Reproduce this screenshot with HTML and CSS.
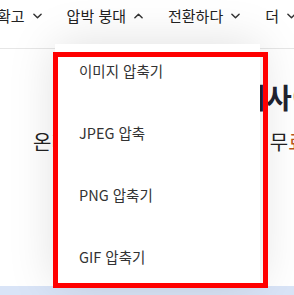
FILE: index.html
```html
<!DOCTYPE html>
<html lang="ko">
<head>
<meta charset="utf-8">
<link rel="stylesheet" href="styles.css">
</head>
<body>
<header class="header">
  <nav class="nav">
    <div class="nav-item"><span>확고</span><svg class="chev" viewBox="0 0 10 6"><polyline points="1,1 5,5 9,1"/></svg></div>
    <div class="nav-item open"><span>압박 붕대</span><svg class="chev" viewBox="0 0 10 6"><polyline points="1,5 5,1 9,5"/></svg>
      <div class="dropdown">
        <ul class="menu">
          <li>이미지 압축기</li>
          <li>JPEG 압축</li>
          <li>PNG 압축기</li>
          <li>GIF 압축기</li>
        </ul>
      </div>
    </div>
    <div class="nav-item"><span>전환하다</span><svg class="chev" viewBox="0 0 10 6"><polyline points="1,1 5,5 9,1"/></svg></div>
    <div class="nav-item"><span>더</span><svg class="chev" viewBox="0 0 10 6"><polyline points="1,1 5,5 9,1"/></svg></div>
  </nav>
</header>
<main class="hero">
  <h1 class="title">압축 리사이저</h1>
  <p class="subtitle">온라인 이미지 용량을 쉽게 무<span class="hl">료로</span></p>
</main>
<section class="band"></section>
<div class="highlight"></div>
</body>
</html>
```

FILE: styles.css
```css
html, body {
  margin: 0;
  padding: 0;
}
body {
  width: 294px;
  height: 295px;
  overflow: hidden;
  position: relative;
  background: #fff;
  font-family: "Noto Sans CJK KR", "Noto Sans", sans-serif;
  color: #222;
}
.header {
  height: 48px;
  border-bottom: 1px solid #e6e6e6;
  background: #fff;
}
.nav {
  display: flex;
  gap: 25px;
  margin-left: -3px;
  padding-top: 6px;
  white-space: nowrap;
}
.nav-item {
  display: flex;
  align-items: center;
  gap: 8px;
  font-size: 15px;
  line-height: 20px;
  color: #222;
}
.chev {
  width: 9px;
  height: 6px;
  fill: none;
  stroke: #333;
  stroke-width: 1.6;
  stroke-linecap: round;
  stroke-linejoin: round;
}
.dropdown {
  position: absolute;
  left: 55px;
  top: 44px;
  width: 205px;
  height: 241px;
  background: #fff;
  box-shadow: 0 0 45px rgba(0, 0, 0, 0.13);
  z-index: 5;
}
.menu {
  list-style: none;
  margin: 0;
  padding: 17px 0 0 24px;
}
.menu li {
  font-size: 14.5px;
  line-height: 20px;
  color: #333;
  margin-bottom: 42px;
}
.hero {
  height: 237px;
  overflow: hidden;
  white-space: nowrap;
}
.title {
  margin: 0;
  padding: 30px 0 0 181px;
  font-size: 28px;
  line-height: 36px;
  font-weight: 700;
  color: #1f2330;
}
.subtitle {
  margin: 0;
  padding: 12px 0 0 33px;
  font-size: 20px;
  line-height: 30px;
  word-spacing: 3px;
  color: #222;
}
.hl {
  color: #b8561b;
}
.band {
  height: 20px;
  background: #d9e4f7;
}
.highlight {
  position: absolute;
  left: 53px;
  top: 52px;
  width: 205px;
  height: 226px;
  border: 5px solid #ff0000;
  z-index: 10;
}
```
